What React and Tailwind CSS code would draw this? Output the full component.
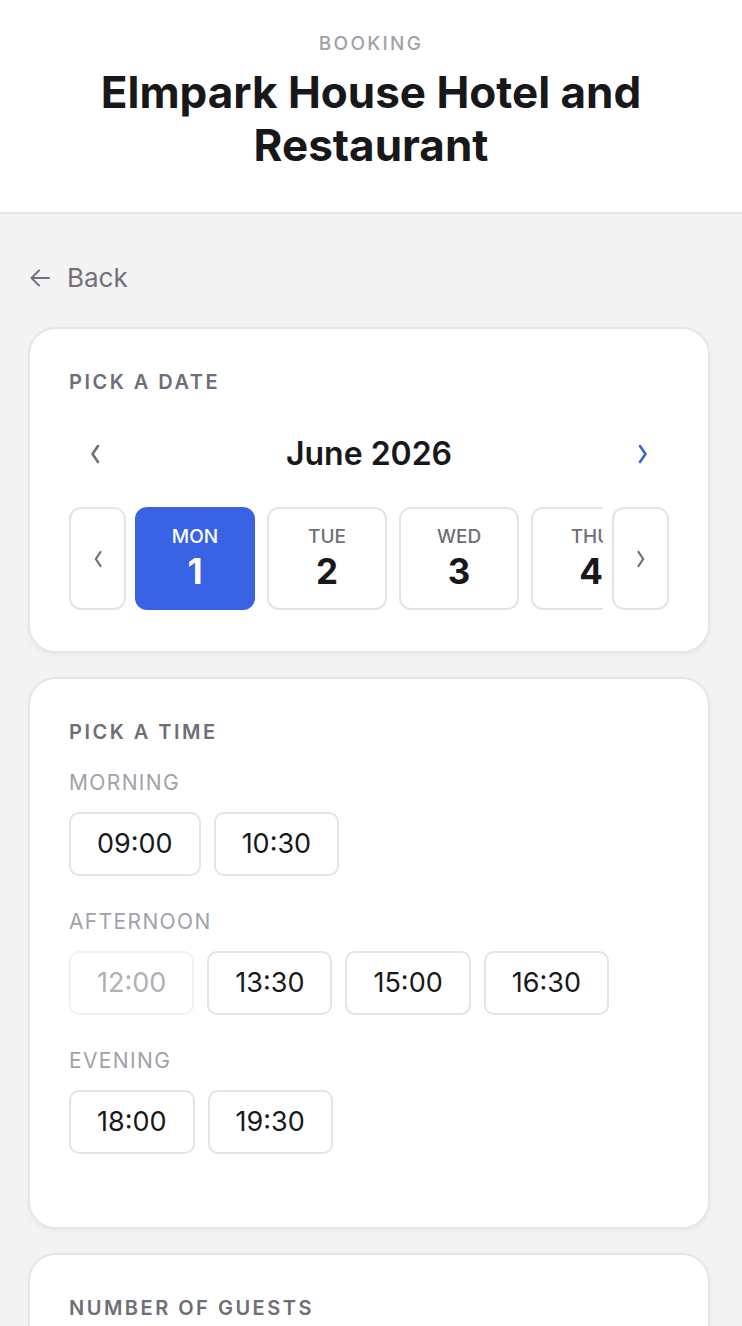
import React from "react";

const days = [
  { d: "MON", n: 1, sel: true },
  { d: "TUE", n: 2 },
  { d: "WED", n: 3 },
  { d: "THU", n: 4 },
  { d: "FRI", n: 5 },
];

const groups = [
  { label: "MORNING", times: [{ t: "09:00" }, { t: "10:30" }] },
  {
    label: "AFTERNOON",
    times: [{ t: "12:00", off: true }, { t: "13:30" }, { t: "15:00" }, { t: "16:30" }],
  },
  { label: "EVENING", times: [{ t: "18:00" }, { t: "19:30" }] },
];

function Card({ children, className = "" }) {
  return (
    <section
      className={
        "bg-white border-2 border-[#e6e6e8] rounded-[28px] shadow-[0_2px_4px_rgba(0,0,0,0.05)] px-[39px] " +
        className
      }
    >
      {children}
    </section>
  );
}

function CardTitle({ children }) {
  return (
    <h2 className="text-[20px] leading-[28px] font-semibold tracking-[0.125em] text-[#6e6e78]">
      {children}
    </h2>
  );
}

export default function App() {
  return (
    <div className="min-h-screen bg-[#f3f3f4] font-['Inter',sans-serif] text-[#18181b]">
      <header className="bg-white border-b-2 border-[#e4e4e7] pt-[32px] pb-[40px] text-center">
        <div className="text-[19px] leading-[24px] font-medium tracking-[0.12em] text-[#a1a1aa]">
          BOOKING
        </div>
        <h1 className="mt-[10px] px-[50px] text-[44px] leading-[53px] font-bold text-[#18181b]">
          Elmpark House Hotel and Restaurant
        </h1>
      </header>

      <main className="pl-[28px] pr-[32px] pb-[40px]">
        <button className="mt-[48px] flex items-center gap-[17px] text-[#71717a] h-[32px]">
          <svg width="20" height="18" viewBox="0 0 20 18" fill="none" className="ml-[2px]">
            <path d="M19 9 H1.5 M9 1.5 L1.5 9 L9 16.5" stroke="currentColor" strokeWidth="2" strokeLinecap="round" strokeLinejoin="round" />
          </svg>
          <span className="text-[26px] leading-[32px]">Back</span>
        </button>

        <div className="mt-[33px] flex flex-col gap-[24px]">
          <Card className="pt-[39px] pb-[41px]">
            <CardTitle>PICK A DATE</CardTitle>
            <div className="mt-[38px] h-[40px] flex items-center justify-between">
              <button className="w-[52px] h-[40px] flex items-center justify-center text-[#6e6e78]">
                <svg width="12" height="20" viewBox="0 0 12 20" fill="none">
                  <path d="M9 2 L3.5 10 L9 18" stroke="currentColor" strokeWidth="2.6" strokeLinecap="round" strokeLinejoin="round" />
                </svg>
              </button>
              <div className="text-[32px] leading-[40px] font-semibold">June 2026</div>
              <button className="w-[52px] h-[40px] flex items-center justify-center text-[#3a63e3]">
                <svg width="12" height="20" viewBox="0 0 12 20" fill="none">
                  <path d="M3 2 L8.5 10 L3 18" stroke="currentColor" strokeWidth="2.6" strokeLinecap="round" strokeLinejoin="round" />
                </svg>
              </button>
            </div>
            <div className="mt-[33px] flex gap-[9px] h-[103px]">
              <button className="w-[57px] shrink-0 border-2 border-[#e4e4e7] rounded-[12px] flex items-center justify-center text-[#6e6e78]">
                <svg width="10" height="18" viewBox="0 0 10 18" fill="none">
                  <path d="M7.5 2 L2.8 9 L7.5 16" stroke="currentColor" strokeWidth="2.2" strokeLinecap="round" strokeLinejoin="round" />
                </svg>
              </button>
              <div className="flex-1 overflow-hidden flex gap-[12px]">
                {days.map((d) => (
                  <div
                    key={d.d}
                    className={
                      "w-[120px] shrink-0 rounded-[12px] border-2 flex flex-col items-center pt-[15px] " +
                      (d.sel
                        ? "bg-[#3a63e3] border-[#3a63e3] text-white"
                        : "bg-white border-[#e4e4e7]")
                    }
                  >
                    <span
                      className={
                        "text-[19px] leading-[26px] font-medium " +
                        (d.sel ? "text-white" : "text-[#6e6e78]")
                      }
                    >
                      {d.d}
                    </span>
                    <span
                      className={
                        "text-[35px] leading-[42px] font-bold " +
                        (d.sel ? "text-white" : "text-[#18181b]")
                      }
                    >
                      {d.n}
                    </span>
                  </div>
                ))}
              </div>
              <button className="w-[57px] shrink-0 border-2 border-[#e4e4e7] rounded-[12px] flex items-center justify-center text-[#6e6e78]">
                <svg width="10" height="18" viewBox="0 0 10 18" fill="none">
                  <path d="M2.5 2 L7.2 9 L2.5 16" stroke="currentColor" strokeWidth="2.2" strokeLinecap="round" strokeLinejoin="round" />
                </svg>
              </button>
            </div>
          </Card>

          <Card className="pt-[39px] pb-[73px]">
            <CardTitle>PICK A TIME</CardTitle>
            {groups.map((g, i) => (
              <div key={g.label} className={i === 0 ? "mt-[23px]" : "mt-[32px]"}>
                <div className="text-[21px] leading-[28px] tracking-[0.065em] text-[#a1a1aa]">
                  {g.label}
                </div>
                <div className="mt-[15px] flex gap-[13px]">
                  {g.times.map((t) => (
                    <button
                      key={t.t}
                      className={
                        "h-[64px] px-[26px] rounded-[10px] border-2 text-[27px] leading-[32px] " +
                        (t.off
                          ? "border-[#f1f1f2] text-[#b0b0b6]"
                          : "border-[#e4e4e7] text-[#18181b]")
                      }
                    >
                      {t.t}
                    </button>
                  ))}
                </div>
              </div>
            ))}
          </Card>

          <Card className="pt-[39px] pb-[40px]">
            <CardTitle>NUMBER OF GUESTS</CardTitle>
            <div className="mt-[30px] flex items-center gap-[16px]">
              <button className="w-[56px] h-[56px] rounded-[12px] border-2 border-[#e4e4e7] text-[28px] text-[#6e6e78]">−</button>
              <span className="text-[30px] font-semibold w-[40px] text-center">2</span>
              <button className="w-[56px] h-[56px] rounded-[12px] border-2 border-[#e4e4e7] text-[28px] text-[#6e6e78]">+</button>
            </div>
          </Card>
        </div>
      </main>
    </div>
  );
}
